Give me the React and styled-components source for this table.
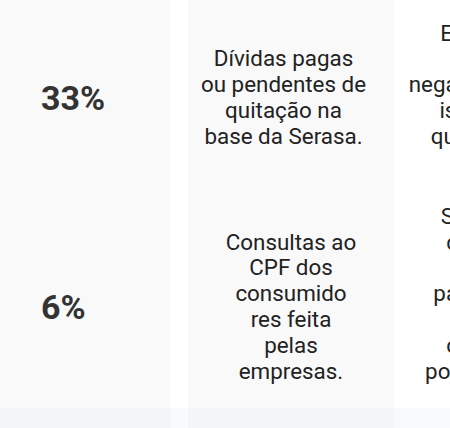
import styled, { createGlobalStyle } from 'styled-components';

const rows = [
  {
    value: '33%',
    text: 'Dívidas pagas\nou pendentes de\nquitação na\nbase da Serasa.',
    extra: 'Empresas\ncom\nnegativações de\nisto é, que\nquitaram as\ndívidas.',
    height: 206,
    padBottom: 10,
    textShift: 15,
  },
  {
    value: '6%',
    text: 'Consultas ao\nCPF dos\nconsumido\nres feita\npelas\nempresas.',
    extra: 'Scores de\ncadastro\nde\npagamento\ndo\ncadastro\npontualidade\ne.',
    height: 202,
    padBottom: 0,
    textShift: 0,
  },
];

export default function App() {
  return (
    <>
      <GlobalStyle />
      <Table>
        {rows.map((r) => (
          <Row key={r.value} $h={r.height}>
            <ValueCell $pb={r.padBottom}>{r.value}</ValueCell>
            <TextCell $pb={r.padBottom} $pr={r.textShift}>{r.text}</TextCell>
            <ExtraCell $pb={r.padBottom}>{r.extra}</ExtraCell>
          </Row>
        ))}
        <FooterRow>
          <FooterCell $w={170} />
          <FooterGap />
          <FooterCell $w={206} />
          <FooterCell $w={192} $light />
        </FooterRow>
      </Table>
    </>
  );
}

const GlobalStyle = createGlobalStyle`
  html, body {
    margin: 0;
    padding: 0;
    background: #ffffff;
    overflow: hidden;
  }
  body {
    font-family: Roboto, "Liberation Sans", sans-serif;
  }
`;

const Table = styled.div`
  width: 450px;
  height: 428px;
  overflow: hidden;
  display: flex;
  flex-direction: column;
`;

const Row = styled.div`
  display: flex;
  align-items: stretch;
  height: ${(p) => p.$h}px;
  flex-shrink: 0;
  width: 586px;
`;

const Cell = styled.div`
  display: flex;
  align-items: center;
  box-sizing: border-box;
  flex-shrink: 0;
  padding-bottom: ${(p) => p.$pb || 0}px;
`;

const ValueCell = styled(Cell)`
  width: 170px;
  margin-right: 18px;
  padding-left: 41px;
  background: #f9f9f9;
  font-size: 34px;
  font-weight: 700;
  color: #333333;
`;

const TextCell = styled(Cell)`
  width: 206px;
  justify-content: center;
  text-align: center;
  padding-right: ${(p) => p.$pr || 0}px;
  background: #f9f9f9;
  white-space: pre-line;
  font-size: 22.4px;
  line-height: 25.8px;
  color: #222222;
`;

const ExtraCell = styled(TextCell)`
  width: 192px;
  background: #ffffff;
`;

const FooterRow = styled.div`
  display: flex;
  flex: 1;
  width: 586px;
`;

const FooterCell = styled.div`
  width: ${(p) => p.$w}px;
  flex-shrink: 0;
  background: ${(p) => (p.$light ? '#f7f9fb' : '#f2f6f9')};
`;

const FooterGap = styled.div`
  width: 18px;
  flex-shrink: 0;
  background: #f8fafc;
`;
